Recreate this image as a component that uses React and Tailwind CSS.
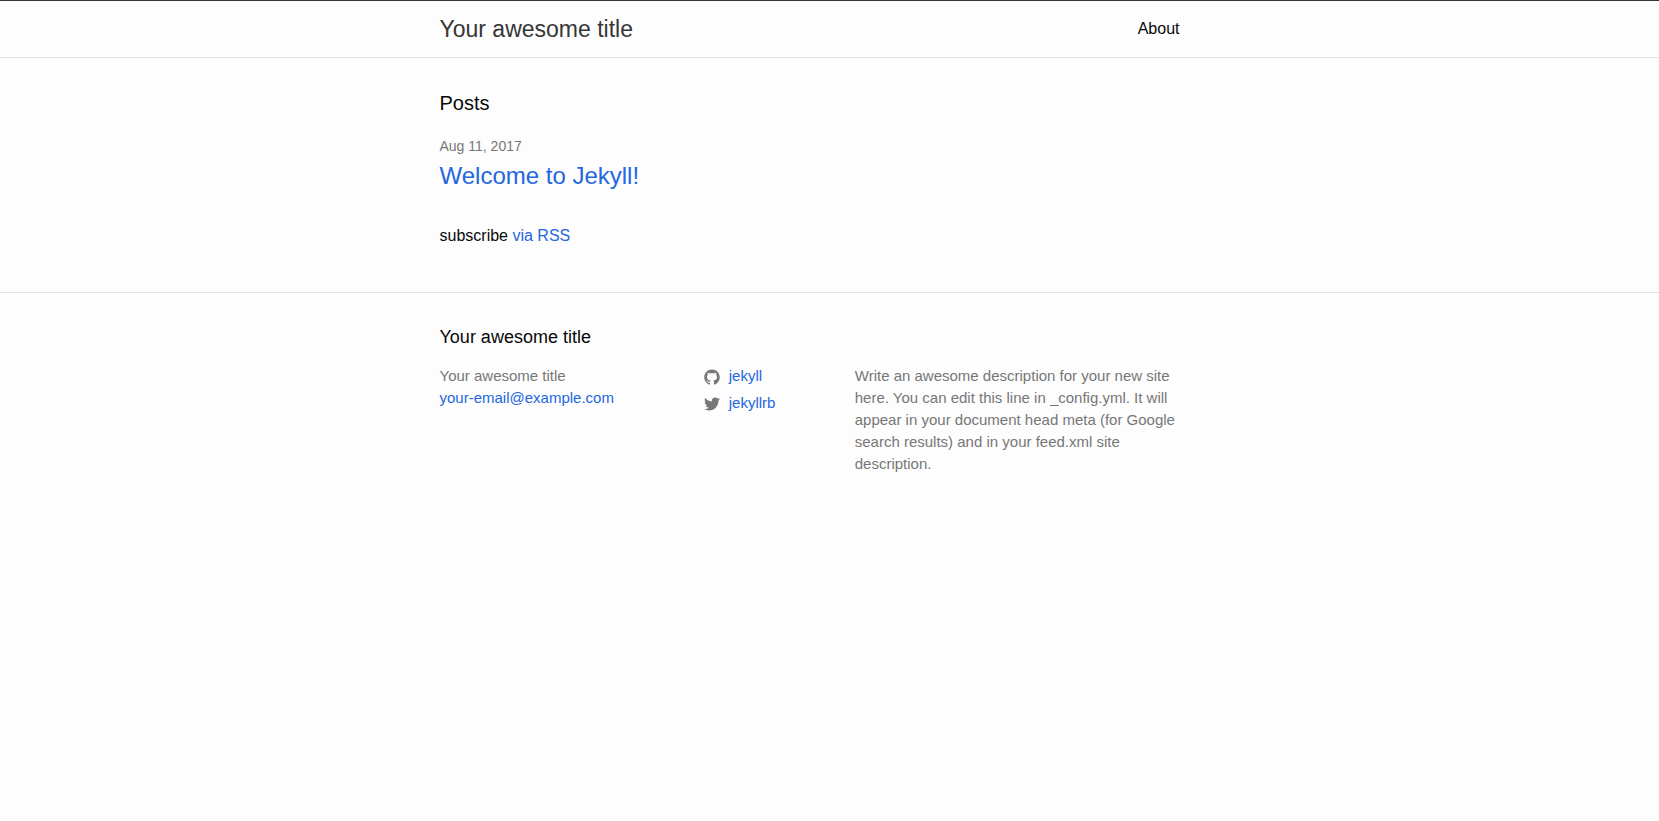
const GITHUB_PATH =
  'M7.999,0.431c-4.285,0-7.76,3.474-7.76,7.761c0,3.428,2.223,6.337,5.307,7.363c0.388,0.071,0.53-0.168,0.53-0.374c0-0.184-0.007-0.672-0.01-1.32c-2.159,0.469-2.614-1.04-2.614-1.04c-0.353-0.896-0.862-1.135-0.862-1.135c-0.705-0.481,0.053-0.472,0.053-0.472c0.779,0.055,1.189,0.8,1.189,0.8c0.692,1.186,1.816,0.843,2.258,0.645c0.071-0.502,0.271-0.843,0.493-1.037C4.86,11.425,3.049,10.76,3.049,7.786c0-0.847,0.302-1.54,0.799-2.082C3.768,5.507,3.501,4.718,3.924,3.65c0,0,0.652-0.209,2.134,0.796C6.677,4.273,7.34,4.187,8,4.184c0.659,0.003,1.323,0.089,1.943,0.261c1.482-1.004,2.132-0.796,2.132-0.796c0.423,1.068,0.157,1.857,0.077,2.054c0.497,0.542,0.798,1.235,0.798,2.082c0,2.981-1.814,3.637-3.543,3.829c0.279,0.24,0.527,0.713,0.527,1.437c0,1.037-0.01,1.874-0.01,2.129c0,0.208,0.14,0.449,0.534,0.373c3.081-1.028,5.302-3.935,5.302-7.362C15.76,3.906,12.285,0.431,7.999,0.431z';

const TWITTER_PATH =
  'M15.969,3.058c-0.586,0.26-1.217,0.436-1.878,0.515c0.675-0.405,1.194-1.045,1.438-1.809c-0.632,0.375-1.332,0.647-2.076,0.793c-0.596-0.636-1.446-1.033-2.387-1.033c-1.806,0-3.27,1.464-3.27,3.27c0,0.256,0.029,0.506,0.085,0.745C5.163,5.404,2.753,4.102,1.14,2.124C0.859,2.607,0.698,3.168,0.698,3.767c0,1.134,0.577,2.135,1.455,2.722C1.616,6.472,1.112,6.325,0.671,6.08c0,0.014,0,0.027,0,0.041c0,1.584,1.127,2.906,2.623,3.206C3.02,9.402,2.731,9.442,2.433,9.442c-0.211,0-0.416-0.021-0.615-0.059c0.416,1.299,1.624,2.245,3.055,2.271c-1.119,0.877-2.529,1.4-4.061,1.4c-0.264,0-0.524-0.015-0.78-0.046c1.447,0.928,3.166,1.469,5.013,1.469c6.015,0,9.304-4.983,9.304-9.304c0-0.142-0.003-0.283-0.009-0.423C14.976,4.29,15.531,3.714,15.969,3.058z';

function Wrapper({ className = '', children }) {
  return (
    <div className="lg:pr-10">
      <div className={`mx-auto max-w-[800px] px-[30px] ${className}`}>{children}</div>
    </div>
  );
}

function SocialLink({ href, path, children }) {
  return (
    <li>
      <a href={href} className="flex items-center gap-[9px] text-[#2467de] hover:underline">
        <svg viewBox="0 0 16 16" className="mt-0.5 size-4 shrink-0 fill-[#777777]" aria-hidden="true">
          <path d={path} />
        </svg>
        {children}
      </a>
    </li>
  );
}

export default function App() {
  return (
    <div className="min-h-screen bg-[#fdfdfd] font-['Helvetica_Neue','Liberation_Sans',Arial,sans-serif] text-base text-[#080808]">
      <header className="border-t border-b border-t-[#363636] border-b-[#e3e3e3]">
        <Wrapper className="flex h-14 items-center justify-between">
          <a href="#home" className="text-[23px] leading-[54px] font-light text-[#363636]">
            Your awesome title
          </a>
          <nav>
            <a href="#about" className="hover:underline">About</a>
          </nav>
        </Wrapper>
      </header>

      <main className="py-[30px]">
        <Wrapper>
          <h1 className="mb-4 text-xl leading-[30px]">Posts</h1>
          <ul className="mb-[30px]">
            <li>
              <time dateTime="2017-08-11" className="block text-sm leading-6 text-[#777777]">
                Aug 11, 2017
              </time>
              <h2 className="text-2xl leading-9">
                <a href="#welcome" className="text-[#2467de] hover:underline">Welcome to Jekyll!</a>
              </h2>
            </li>
          </ul>
          <p className="mb-[14px]">
            subscribe <a href="#feed" className="text-[#2467de] hover:underline">via RSS</a>
          </p>
        </Wrapper>
      </main>

      <footer className="border-t border-[#e3e3e3] py-[30px]">
        <Wrapper>
          <h2 className="mb-[14px] text-lg leading-7">Your awesome title</h2>
          <div className="-ml-[15px] grid grid-cols-1 text-[15px] leading-[22px] text-[#777777] sm:grid-cols-[7fr_4fr_9fr]">
            <ul className="pl-[15px]">
              <li>Your awesome title</li>
              <li>
                <a href="mailto:your-email@example.com" className="text-[#2467de] hover:underline">
                  your-email@example.com
                </a>
              </li>
            </ul>
            <ul className="flex flex-col gap-[5px] pl-[15px]">
              <SocialLink href="#github" path={GITHUB_PATH}>jekyll</SocialLink>
              <SocialLink href="#twitter" path={TWITTER_PATH}>jekyllrb</SocialLink>
            </ul>
            <p className="pl-[15px]">
              Write an awesome description for your new site here. You can edit this line in
              _config.yml. It will appear in your document head meta (for Google search results) and
              in your feed.xml site description.
            </p>
          </div>
        </Wrapper>
      </footer>
    </div>
  );
}
